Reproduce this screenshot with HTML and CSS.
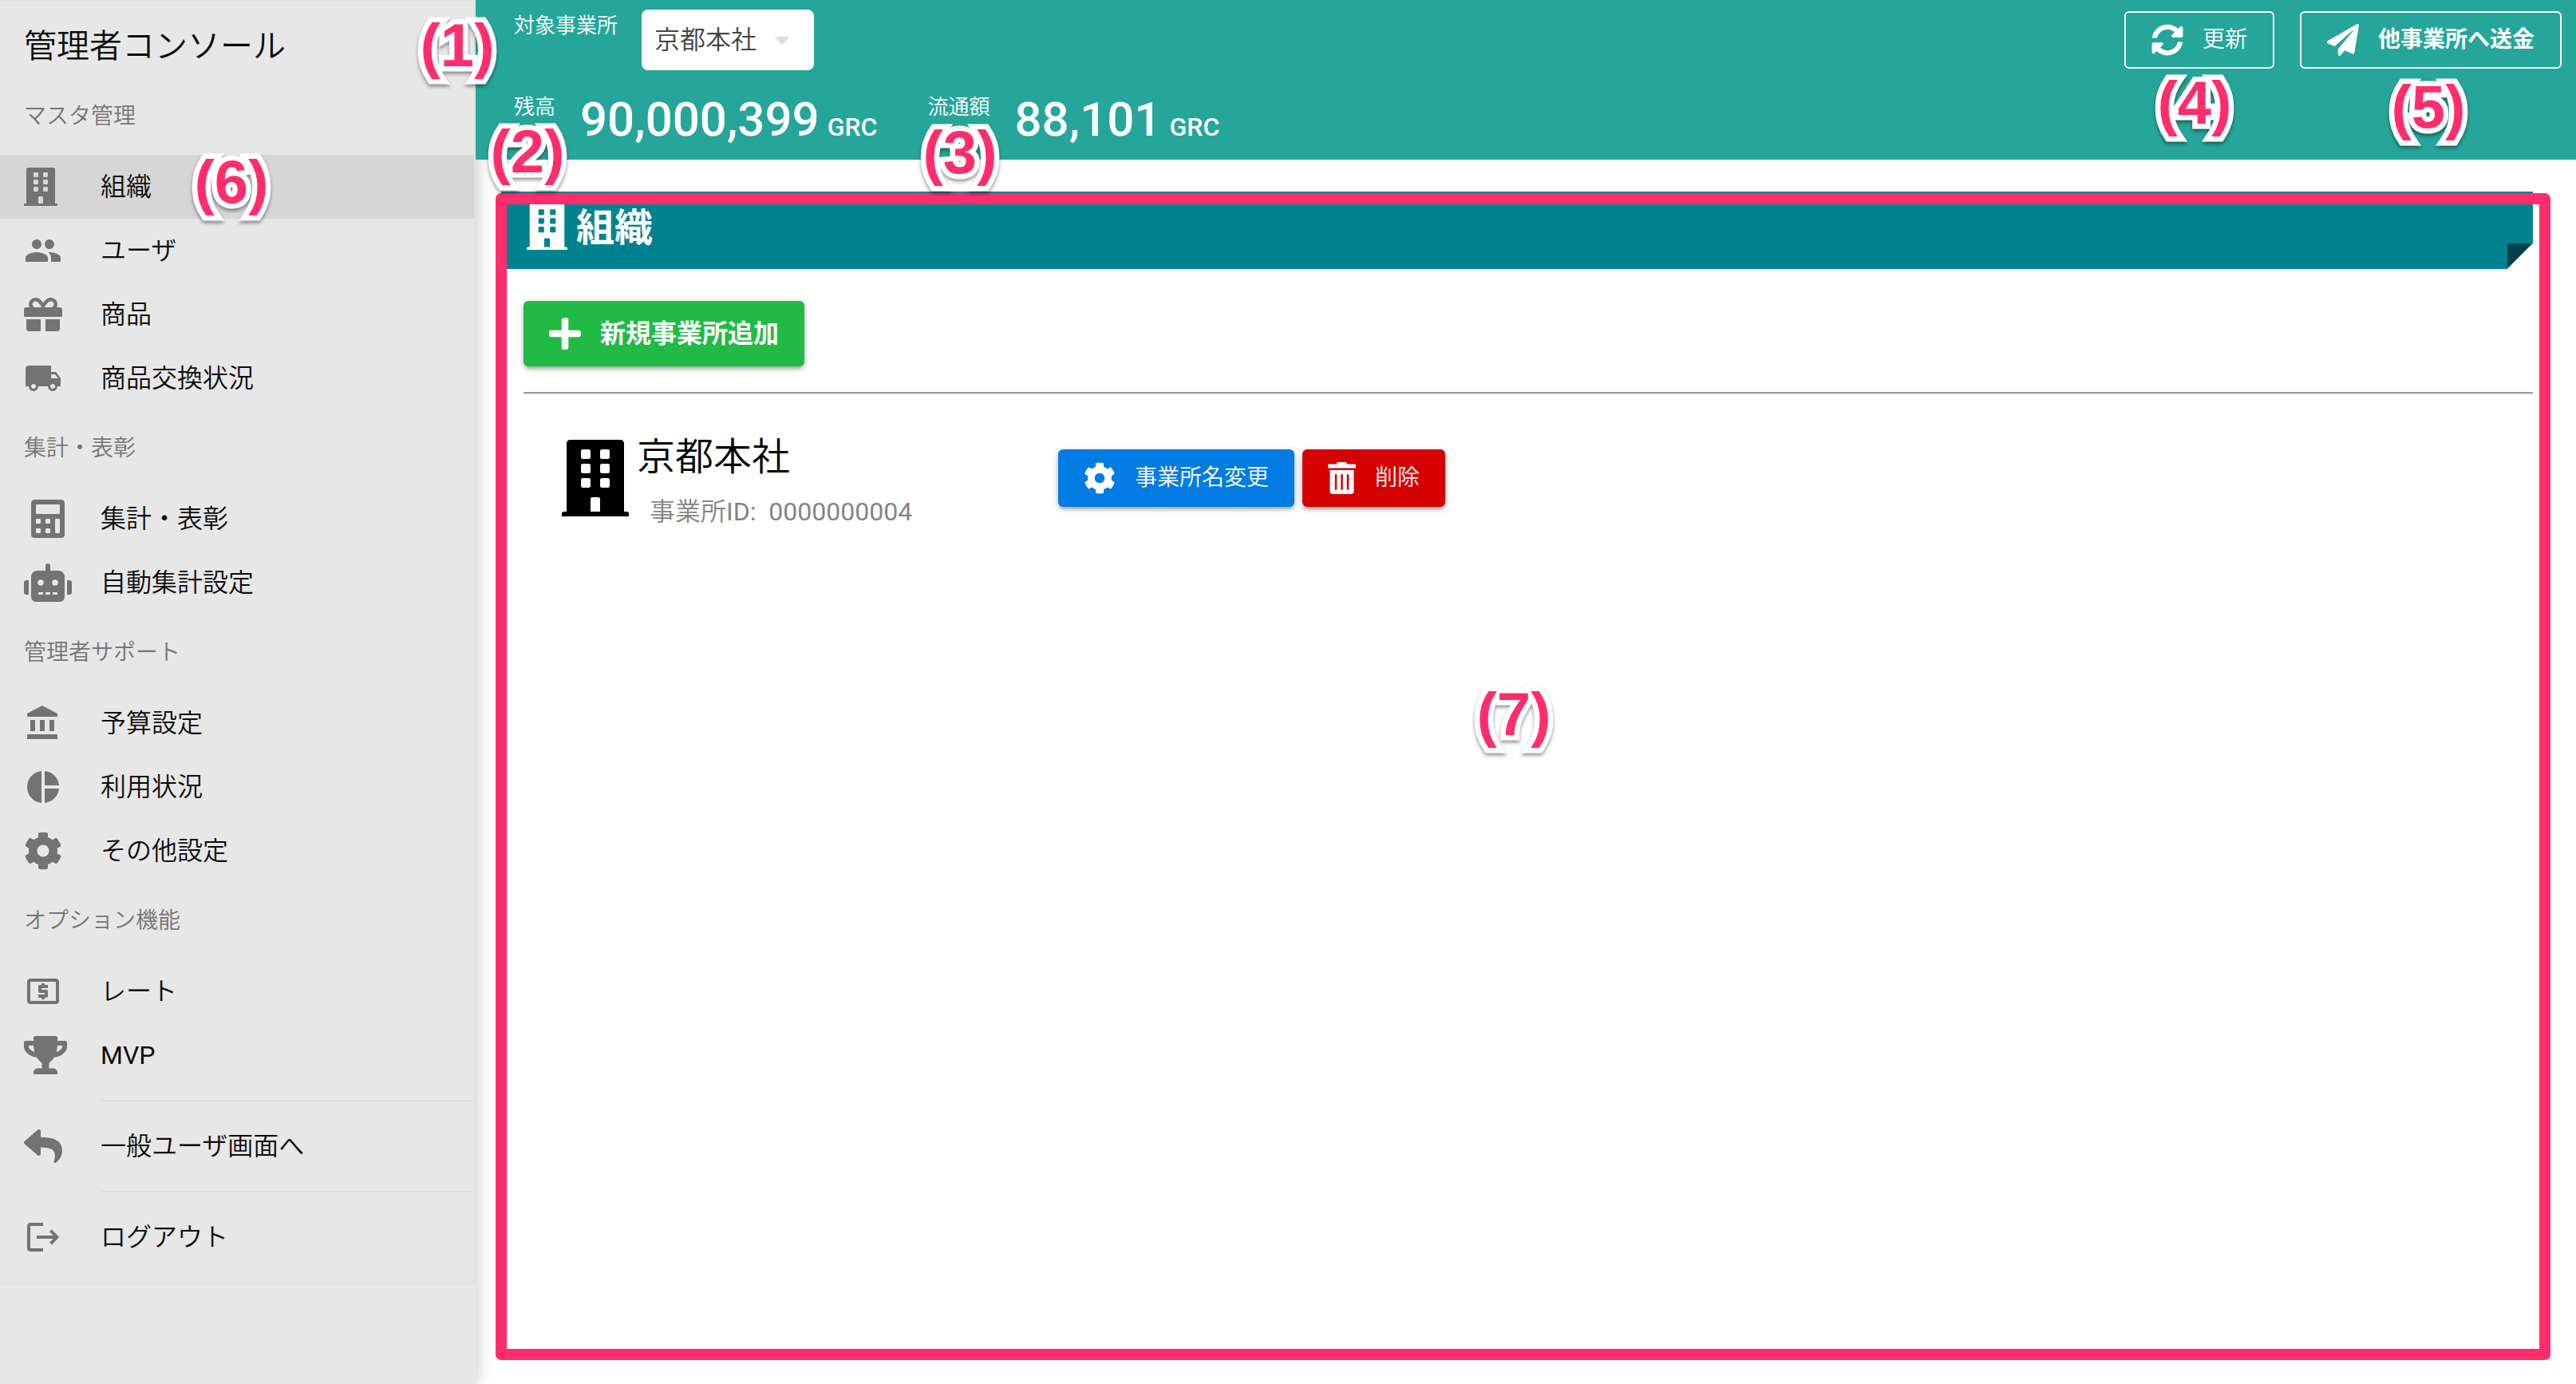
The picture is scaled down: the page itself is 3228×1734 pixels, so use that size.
FILE: index.html
```html
<!DOCTYPE html>
<html lang="ja">
<head>
<meta charset="utf-8">
<meta name="viewport" content="width=device-width, initial-scale=1">
<title>管理者コンソール</title>
<link rel="stylesheet" href="styles.css">
</head>
<body>
<svg class="sprite" aria-hidden="true">
  <symbol id="building" viewBox="0 0 448 512"><path fill-rule="evenodd" d="M436 480h-20V24C416 10.700 405.300 0 392 0H56C42.700 0 32 10.700 32 24V480H12C5.400 480 0 485.400 0 492V512H448V492C448 485.400 442.600 480 436 480ZM140 64h40q12 0 12 12v40q0 12-12 12h-40q-12 0-12-12V76q0-12 12-12ZM268 64h40q12 0 12 12v40q0 12-12 12h-40q-12 0-12-12V76q0-12 12-12ZM140 160h40q12 0 12 12v40q0 12-12 12h-40q-12 0-12-12v-40q0-12 12-12ZM268 160h40q12 0 12 12v40q0 12-12 12h-40q-12 0-12-12v-40q0-12 12-12ZM140 256h40q12 0 12 12v40q0 12-12 12h-40q-12 0-12-12v-40q0-12 12-12ZM268 256h40q12 0 12 12v40q0 12-12 12h-40q-12 0-12-12v-40q0-12 12-12ZM204 384h40q12 0 12 12v84h-64v-84q0-12 12-12Z"/></symbol>
  <symbol id="people" viewBox="0 0 24 24"><path d="M16 11c1.660 0 2.990-1.340 2.990-3S17.660 5 16 5c-1.660 0-3 1.340-3 3s1.340 3 3 3zm-8 0c1.660 0 2.990-1.340 2.990-3S9.660 5 8 5C6.340 5 5 6.340 5 8s1.340 3 3 3zm0 2c-2.330 0-7 1.170-7 3.500V19h14v-2.500c0-2.330-4.670-3.500-7-3.500zm8 0c-.29 0-.62.020-.97.050 1.160.84 1.970 1.970 1.970 3.450V19h6v-2.500c0-2.330-4.670-3.500-7-3.500z"/></symbol>
  <symbol id="gift" viewBox="0 0 512 512"><path d="M32 448c0 17.700 14.300 32 32 32h160V320H32v128zm256 32h160c17.700 0 32-14.300 32-32V320H288v160zm192-320h-42.100c6.200-12.100 10.100-25.500 10.100-40 0-48.500-39.500-88-88-88-41.600 0-68.500 21.300-103 68.300-34.500-47-61.400-68.300-103-68.300-48.500 0-88 39.500-88 88 0 14.500 3.800 27.900 10.100 40H32c-17.700 0-32 14.300-32 32v80c0 8.800 7.200 16 16 16h480c8.800 0 16-7.200 16-16v-80c0-17.700-14.300-32-32-32zm-326.100 0c-22.100 0-40-17.900-40-40s17.900-40 40-40c19.900 0 34.600 3.300 86.100 80h-86.100zm206.100 0h-86.100c51.400-76.500 65.700-80 86.100-80 22.100 0 40 17.900 40 40s-17.900 40-40 40z"/></symbol>
  <symbol id="truck" viewBox="0 0 24 24"><path d="M20 8h-3V4H3c-1.100 0-2 .9-2 2v11h2c0 1.660 1.340 3 3 3s3-1.340 3-3h6c0 1.660 1.340 3 3 3s3-1.340 3-3h2v-5l-3-4zM6 18.500c-.83 0-1.500-.67-1.500-1.500s.67-1.500 1.500-1.500 1.500.67 1.500 1.500-.67 1.500-1.500 1.500zm13.500-9l1.960 2.500H17V9.500h2.500zm-1.500 9c-.83 0-1.500-.67-1.500-1.500s.67-1.500 1.500-1.500 1.500.67 1.500 1.500-.67 1.500-1.500 1.500z"/></symbol>
  <symbol id="calculator" viewBox="0 0 448 512"><path fill-rule="evenodd" d="M48 0H400Q448 0 448 48V464Q448 512 400 512H48Q0 512 0 464V48Q0 0 48 0ZM77 64H371Q384 64 384 77V179Q384 192 371 192H77Q64 192 64 179V77Q64 64 77 64ZM77 256h38q13 0 13 13v38q0 13-13 13H77q-13 0-13-13v-38q0-13 13-13ZM205 256h38q13 0 13 13v38q0 13-13 13h-38q-13 0-13-13v-38q0-13 13-13ZM77 384h38q13 0 13 13v38q0 13-13 13H77q-13 0-13-13v-38q0-13 13-13ZM205 384h38q13 0 13 13v38q0 13-13 13h-38q-13 0-13-13v-38q0-13 13-13ZM333 256h38q13 0 13 13v166q0 13-13 13h-38q-13 0-13-13V269q0-13 13-13Z"/></symbol>
  <symbol id="robot" viewBox="0 0 640 512"><path fill-rule="evenodd" d="M32 224H64V416H32A32 32 0 0 1 0 384V256A32 32 0 0 1 32 224ZM544 176V448a64 64 0 0 1-64 64H160a64 64 0 0 1-64-64V176a80 80 0 0 1 80-80H288V32a32 32 0 0 1 64 0V96H464A80 80 0 0 1 544 176ZM264 256a40 40 0 1 0-40 40A40 40 0 0 0 264 256ZM256 384H192v32h64ZM352 384H288v32h64ZM456 256a40 40 0 1 0-40 40A40 40 0 0 0 456 256ZM448 384H384v32h64ZM640 256V384a32 32 0 0 1-32 32H576V224h32A32 32 0 0 1 640 256Z"/></symbol>
  <symbol id="bank" viewBox="0 0 24 24"><path d="M4 10v7h3v-7H4zm6 0v7h3v-7h-3zM2 22h19v-3H2v3zm14-12v7h3v-7h-3zm-4.500-9L2 6v2h19V6l-9.500-5z"/></symbol>
  <symbol id="pie" viewBox="0 0 24 24"><path d="M11 2v20c-5.070-.5-9-4.790-9-10s3.930-9.500 9-10zm2.030 0v8.990H22c-.47-4.740-4.240-8.520-8.970-8.990zm0 11.010V22c4.740-.47 8.500-4.250 8.970-8.990h-8.970z"/></symbol>
  <symbol id="cog" viewBox="0 0 512 512"><path d="M487.400 315.700l-42.600-24.600c4.300-23.200 4.300-47 0-70.200l42.600-24.600c4.900-2.800 7.100-8.600 5.500-14-11.100-35.600-30-67.800-54.700-94.600-3.800-4.100-10-5.100-14.800-2.300L380.800 110c-17.900-15.400-38.500-27.300-60.800-35.100V25.800c0-5.600-3.900-10.500-9.400-11.700-36.700-8.200-74.300-7.800-109.200 0-5.500 1.200-9.400 6.100-9.400 11.700V75c-22.200 7.900-42.800 19.800-60.800 35.100L88.700 85.500c-4.900-2.800-11-1.900-14.800 2.300-24.700 26.700-43.600 58.900-54.700 94.600-1.700 5.400.6 11.200 5.500 14L67.300 221c-4.300 23.200-4.300 47 0 70.200l-42.600 24.600c-4.900 2.800-7.100 8.600-5.500 14 11.100 35.600 30 67.800 54.700 94.600 3.800 4.100 10 5.100 14.800 2.300l42.600-24.600c17.900 15.400 38.500 27.300 60.800 35.100v49.200c0 5.600 3.900 10.500 9.400 11.700 36.700 8.200 74.300 7.800 109.200 0 5.500-1.200 9.400-6.100 9.400-11.700v-49.200c22.200-7.900 42.800-19.800 60.800-35.100l42.600 24.600c4.900 2.800 11 1.900 14.800-2.300 24.700-26.700 43.600-58.900 54.700-94.600 1.500-5.500-.7-11.300-5.600-14.100zM256 336c-44.100 0-80-35.900-80-80s35.900-80 80-80 80 35.900 80 80-35.900 80-80 80z"/></symbol>
  <symbol id="rate" viewBox="0 0 24 24"><path d="M11 17h2v-1h1c.55 0 1-.45 1-1v-3c0-.55-.45-1-1-1h-3v-1h4V8h-2V7h-2v1h-1c-.55 0-1 .45-1 1v3c0 .55.45 1 1 1h3v1H9v2h2v1zm9-13H4c-1.110 0-1.990.89-1.990 2L2 18c0 1.110.89 2 2 2h16c1.110 0 2-.89 2-2V6c0-1.110-.89-2-2-2zm0 14H4V6h16v12z"/></symbol>
  <symbol id="trophy" viewBox="0 0 576 512"><path d="M552 64H448V24c0-13.300-10.700-24-24-24H152c-13.300 0-24 10.700-24 24v40H24C10.700 64 0 74.700 0 88v56c0 35.700 22.500 72.400 61.900 100.700 31.500 22.700 69.800 37.100 110 41.700C203.300 338.500 240 360 240 360v72h-48c-35.300 0-64 20.700-64 56v12c0 6.600 5.400 12 12 12h296c6.600 0 12-5.400 12-12v-12c0-35.300-28.700-56-64-56h-48v-72s36.700-21.500 68.100-73.600c40.300-4.600 78.600-19 110-41.700 39.300-28.300 61.900-65 61.900-100.700V88c0-13.300-10.700-24-24-24zM99.300 192.800C74.900 175.200 64 155.600 64 144v-16h64.200c1 32.600 5.800 61.200 12.800 86.200-15.100-5.200-29.200-12.400-41.700-21.400zM512 144c0 16.100-17.700 36.100-35.300 48.800-12.500 9-26.700 16.200-41.800 21.400 7-25 11.800-53.600 12.800-86.200H512v16z"/></symbol>
  <symbol id="reply" viewBox="0 0 512 512"><path d="M8.309 189.836L184.313 37.851C199.719 24.546 224 35.347 224 56.015v80.053c160.629 1.839 288 34.032 288 186.258 0 61.441-39.581 122.309-83.333 154.132-13.653 9.931-33.111-2.533-28.077-18.631 45.344-145.012-21.507-183.510-176.590-185.742V360c0 20.700-24.300 31.453-39.687 18.164l-176.004-152c-11.071-9.562-11.086-26.753 0-36.328z"/></symbol>
  <symbol id="logout" viewBox="0 0 24 24"><path d="M12 3H4c-1.100 0-2 .9-2 2v14c0 1.100.9 2 2 2h8v-2H4V5h8zM17.500 7.200L16 8.600l2.400 2.400H8v2h10.400L16 15.400l1.500 1.400L22 12z"/></symbol>
  <symbol id="sync" viewBox="0 0 512 512"><path d="M370.720 133.280C339.458 104.008 298.888 87.962 255.848 88c-77.458.068-144.328 53.178-162.791 126.850-1.344 5.363-6.122 9.150-11.651 9.150H24.103c-7.498 0-13.194-6.807-11.807-14.176C33.933 94.924 134.813 8 256 8c66.448 0 126.791 26.136 171.315 68.685L463.030 40.970C478.149 25.851 504 36.559 504 57.941V192c0 13.255-10.745 24-24 24H345.941c-21.382 0-32.090-25.851-16.971-40.971l41.750-41.749zM32 296h134.059c21.382 0 32.090 25.851 16.971 40.971l-41.750 41.750c31.262 29.273 71.835 45.319 114.876 45.280 77.418-.070 144.315-53.144 162.787-126.849 1.344-5.363 6.122-9.150 11.651-9.150h57.304c7.498 0 13.194 6.807 11.807 14.176C478.067 417.076 377.187 504 256 504c-66.448 0-126.791-26.136-171.315-68.685L48.970 471.030C33.851 486.149 8 475.441 8 454.059V320c0-13.255 10.745-24 24-24z"/></symbol>
  <symbol id="plane" viewBox="0 0 512 512"><path d="M476 3.200L12.500 270.600c-18.100 10.400-15.800 35.600 2.200 43.200L121 358.400l287.300-253.200c5.500-4.900 13.300 2.600 8.600 8.300L176 407v80.500c0 23.600 28.500 32.900 42.500 15.800L282 426l124.600 52.200c14.200 6 30.400-2.900 33-18.200l72-432C515 7.800 493.300-6.800 476 3.200z"/></symbol>
  <symbol id="plus" viewBox="0 32 448 448"><path d="M416 208H272V64c0-17.670-14.330-32-32-32h-32c-17.670 0-32 14.330-32 32v144H32c-17.670 0-32 14.330-32 32v32c0 17.670 14.330 32 32 32h144v144c0 17.670 14.330 32 32 32h32c17.670 0 32-14.330 32-32V304h144c17.670 0 32-14.330 32-32v-32c0-17.670-14.330-32-32-32z"/></symbol>
  <symbol id="trash" viewBox="0 0 448 512"><path d="M32 464a48 48 0 0 0 48 48h288a48 48 0 0 0 48-48V128H32zm272-256a16 16 0 0 1 32 0v224a16 16 0 0 1-32 0zm-96 0a16 16 0 0 1 32 0v224a16 16 0 0 1-32 0zm-96 0a16 16 0 0 1 32 0v224a16 16 0 0 1-32 0zM432 32H312l-9.400-18.700A24 24 0 0 0 281.100 0H166.800a23.720 23.720 0 0 0-21.400 13.300L136 32H16A16 16 0 0 0 0 48v32a16 16 0 0 0 16 16h416a16 16 0 0 0 16-16V48a16 16 0 0 0-16-16z"/></symbol>
</svg>

<aside class="sidebar">
  <nav class="menu">
    <h1 class="menu-title">管理者コンソール</h1>

    <h2 class="menu-heading">マスタ管理</h2>
    <a class="menu-item is-active" href="#org"><span class="menu-icon"><svg class="icon-narrow"><use href="#building"/></svg></span>組織</a>
    <a class="menu-item" href="#users"><span class="menu-icon"><svg class="icon"><use href="#people"/></svg></span>ユーザ</a>
    <a class="menu-item" href="#goods"><span class="menu-icon"><svg class="icon"><use href="#gift"/></svg></span>商品</a>
    <a class="menu-item" href="#exchange"><span class="menu-icon"><svg class="icon"><use href="#truck"/></svg></span>商品交換状況</a>

    <h2 class="menu-heading">集計・表彰</h2>
    <a class="menu-item" href="#summary"><span class="menu-icon"><svg class="icon-fixed"><use href="#calculator"/></svg></span>集計・表彰</a>
    <a class="menu-item" href="#auto"><span class="menu-icon"><svg class="icon-fixed"><use href="#robot"/></svg></span>自動集計設定</a>

    <h2 class="menu-heading">管理者サポート</h2>
    <a class="menu-item" href="#budget"><span class="menu-icon"><svg class="icon"><use href="#bank"/></svg></span>予算設定</a>
    <a class="menu-item" href="#usage"><span class="menu-icon"><svg class="icon"><use href="#pie"/></svg></span>利用状況</a>
    <a class="menu-item" href="#settings"><span class="menu-icon"><svg class="icon"><use href="#cog"/></svg></span>その他設定</a>

    <h2 class="menu-heading">オプション機能</h2>
    <a class="menu-item" href="#rate-page"><span class="menu-icon"><svg class="icon"><use href="#rate"/></svg></span>レート</a>
    <a class="menu-item" href="#mvp"><span class="menu-icon"><svg class="icon-wide"><use href="#trophy"/></svg></span><span class="latin">MVP</span></a>
    <hr class="menu-divider">
    <a class="menu-item" href="#user-view"><span class="menu-icon"><svg class="icon"><use href="#reply"/></svg></span>一般ユーザ画面へ</a>
    <hr class="menu-divider">
    <a class="menu-item" href="#sign-out"><span class="menu-icon"><svg class="icon"><use href="#logout"/></svg></span>ログアウト</a>
  </nav>
</aside>

<div class="page">
  <header class="topbar">
    <div class="summary">
      <div class="office">
        <label class="caption" for="office">対象事業所</label>
        <span class="picker">
          <select id="office" class="picker-select"><option>京都本社</option></select>
          <svg class="picker-arrow" viewBox="0 0 20 10" aria-hidden="true"><path d="M0 0h20L10 10z"/></svg>
        </span>
      </div>
      <dl class="amounts">
        <div class="amount"><dt class="caption">残高</dt><dd class="amount-value">90,000,399<span class="unit">GRC</span></dd></div>
        <div class="amount"><dt class="caption">流通額</dt><dd class="amount-value">88,101<span class="unit">GRC</span></dd></div>
      </dl>
    </div>
    <div class="actions">
      <button class="btn btn-outline" type="button"><svg class="btn-icon"><use href="#sync"/></svg>更新</button>
      <button class="btn btn-outline btn-strong" type="button"><svg class="btn-icon"><use href="#plane"/></svg>他事業所へ送金</button>
    </div>
  </header>

  <main class="content">
    <h2 class="ribbon"><svg class="ribbon-icon"><use href="#building"/></svg>組織</h2>
    <div class="panel">
      <button class="btn btn-add btn-strong" type="button"><svg class="btn-icon"><use href="#plus"/></svg>新規事業所追加</button>
      <hr class="rule">
      <article class="office-row">
        <svg class="office-icon"><use href="#building"/></svg>
        <div class="office-text">
          <h3 class="office-name">京都本社</h3>
          <p class="office-id">事業所<span class="latin">ID:&nbsp; 0000000004</span></p>
        </div>
        <div class="office-actions">
          <button class="btn btn-edit" type="button"><svg class="btn-icon"><use href="#cog"/></svg>事業所名変更</button>
          <button class="btn btn-delete" type="button"><svg class="btn-icon btn-icon-narrow"><use href="#trash"/></svg>削除</button>
        </div>
      </article>
    </div>
  </main>
  <div class="frame"></div>
</div>

<span class="mark mark-1">(1)</span>
<span class="mark mark-2">(2)</span>
<span class="mark mark-3">(3)</span>
<span class="mark mark-4">(4)</span>
<span class="mark mark-5">(5)</span>
<span class="mark mark-6">(6)</span>
<span class="mark mark-7">(7)</span>
</body>
</html>
```
FILE: styles.css
```css
* { box-sizing: border-box; }

body {
  position: relative;
  display: flex;
  min-height: 100vh;
  margin: 0;
  background: #fff;
  color: #0c0c0c;
  font-family: Roboto, "Noto Sans CJK JP", sans-serif;
  font-size: 32px;
  font-weight: 350;
}

h1, h2, h3, p, dl, dd { margin: 0; font-weight: inherit; }
svg { display: block; flex: none; fill: currentColor; }
.sprite { position: absolute; width: 0; height: 0; }
.latin { font-weight: 400; }

/* Sidebar */
.sidebar {
  flex: none;
  width: 596px;
  background: #e7e7e7;
  box-shadow: 0 0 20px rgba(0, 0, 0, .25);
}
.menu {
  padding-bottom: 16px;
  border: solid #e0e0e0;
  border-width: 2px 2px 2px 0;
}
.menu-title {
  padding: 26px 30px 10px;
  font-size: 41px;
  line-height: 60px;
}
.menu-heading {
  padding-left: 30px;
  color: #757575;
  font-size: 28px;
  line-height: 96px;
}
.menu-item {
  display: flex;
  align-items: center;
  height: 80px;
  padding-left: 30px;
  color: inherit;
  line-height: 80px;
  text-decoration: none;
}
.menu-item.is-active { background: #d6d6d6; }
.menu-icon { flex: none; width: 96px; color: #737373; }
.icon { width: 48px; height: 48px; }
.icon-narrow { width: 42px; height: 48px; }
.icon-wide { width: 54px; height: 48px; }
.icon-fixed { width: 60px; height: 48px; }
.menu-divider {
  height: 2px;
  margin: 16px 0 16px 126px;
  border: 0;
  background: #dfdfdf;
}

/* Top bar */
.page { position: relative; flex: 1; min-width: 0; }
.topbar {
  position: relative;
  display: flex;
  justify-content: space-between;
  height: 200px;
  padding: 12px 18px 0 48px;
  background: #26a69a;
  color: #fff;
}
.office { display: flex; gap: 30px; }
.caption { font-size: 26px; line-height: 40px; }
.picker { position: relative; }
.picker-select {
  width: 216px;
  height: 76px;
  padding: 0 16px;
  border: 0;
  border-radius: 8px;
  background: #fff;
  color: #444;
  font: inherit;
  appearance: none;
}
.picker-arrow {
  position: absolute;
  top: 34px;
  right: 30px;
  width: 20px;
  height: 10px;
  fill: #ddd;
}
.amounts { display: flex; gap: 63px; padding-top: 26px; }
.amount { display: flex; gap: 31px; }
.amount-value {
  display: flex;
  align-items: baseline;
  gap: 10px;
  font-size: 60px;
  font-weight: 500;
  line-height: 72px;
}
.unit { font-size: 32px; }
.actions { display: flex; align-items: flex-start; gap: 32px; padding-top: 2px; }

/* Buttons */
.btn {
  display: flex;
  align-items: center;
  gap: 24px;
  height: 72px;
  padding: 0 32px;
  border: 0;
  border-radius: 6px;
  color: #fff;
  font: inherit;
  font-size: 28px;
  line-height: 48px;
  white-space: nowrap;
  box-shadow: 0 2px 10px rgba(0, 0, 0, .2), 0 4px 4px rgba(0, 0, 0, .14), 0 6px 2px -4px rgba(0, 0, 0, .12);
}
.btn-outline { border: 2px solid #fff; background: none; box-shadow: none; }
.btn-strong { font-weight: 700; }
.btn-icon { width: 40px; height: 40px; }
.btn-icon-narrow { width: 35px; }
.btn-add { height: 82px; background: #21ba45; font-size: 32px; }
.btn-edit { background: #027be3; }
.btn-delete { background: #d50000; }

/* Content */
.content { padding: 40px 54px 0 32px; }
.ribbon {
  display: flex;
  align-items: center;
  gap: 11px;
  padding: 10px 32px 15px;
  background: linear-gradient(135deg, #00424a 50%, #fff 50%) right bottom / 32px 32px no-repeat, #00838f;
  color: #fff;
  font-size: 48px;
  font-weight: 700;
  line-height: 72px;
}
.ribbon-icon { width: 51px; height: 58px; margin-bottom: 4px; }
.panel { padding: 40px 0 0 28px; }
.rule {
  margin: 32px 0 0;
  border: solid;
  border-width: 2px 0;
  border-color: #9a9a9a #eee #eee;
}
.office-row { display: flex; align-items: center; padding: 30px 0 0 48px; color: #000; }
.office-icon { width: 84px; height: 96px; }
.office-text { width: 538px; padding: 12px 0 0 10px; }
.office-name { font-size: 48px; line-height: 72px; }
.office-id { padding-left: 16px; color: #858585; line-height: 64px; }
.office-actions { display: flex; gap: 10px; }

/* Annotations laid over the screen */
.frame {
  position: absolute;
  inset: 242px 32px 30px 25px;
  border: 14px solid #ff2d6c;
  border-radius: 7px;
}
.mark {
  position: absolute;
  transform: translate(-50%, -50%);
  color: #ff2d6c;
  font-family: "Liberation Sans", sans-serif;
  font-size: 76px;
  font-weight: 700;
  line-height: 1;
  -webkit-text-stroke: 13px #fff;
  stroke-linejoin: round;
  paint-order: stroke fill;
  filter: drop-shadow(0 3px 2px rgba(0, 0, 0, .4));
}
.mark-1 { left: 573px; top: 57px; }
.mark-2 { left: 661px; top: 190px; }
.mark-3 { left: 1203px; top: 191px; }
.mark-4 { right: 478px; top: 129px; transform: translate(50%, -50%); }
.mark-5 { right: 185px; top: 134px; transform: translate(50%, -50%); }
.mark-6 { left: 290px; top: 228px; }
.mark-7 { left: 1897px; top: 895px; }
```
